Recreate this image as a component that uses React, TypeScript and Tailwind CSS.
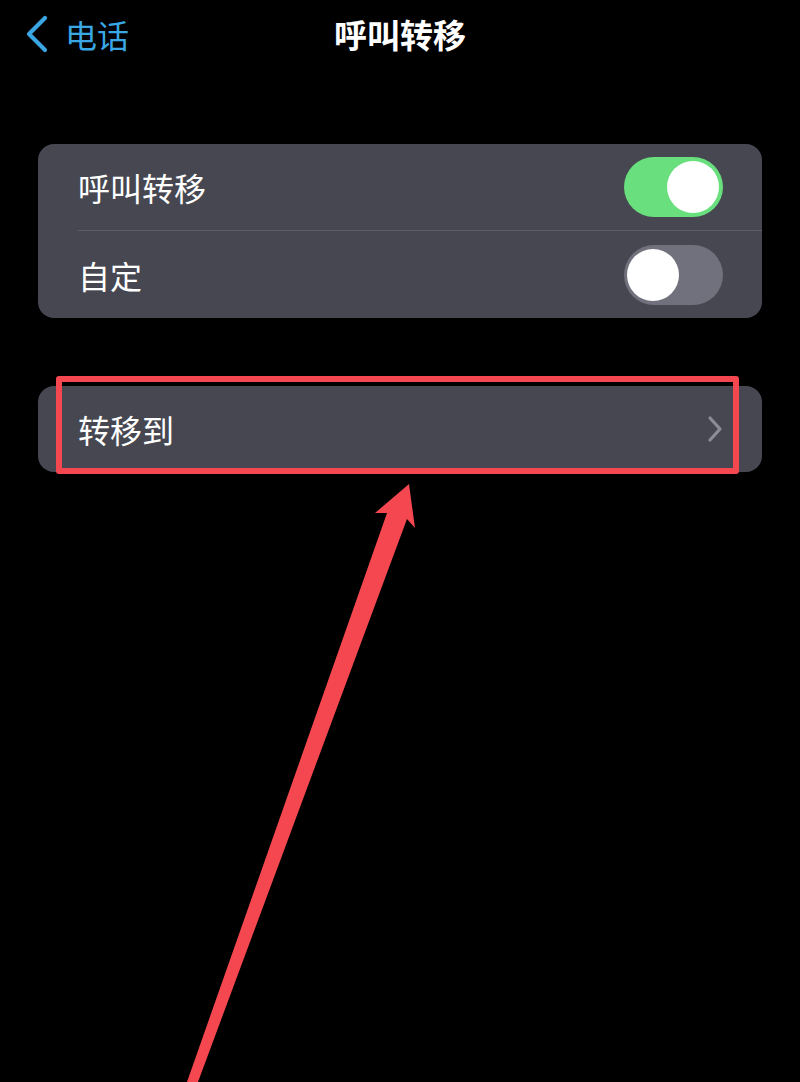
const font = { fontFamily: '"Noto Sans CJK SC", "Noto Sans", sans-serif' }

function Toggle({ on }: { on: boolean }) {
    return (
        <div
            className={`relative w-[99px] h-[60px] rounded-full ${on ? 'bg-[#69df7d]' : 'bg-[#71717d]'}`}
        >
            <div
                className={`absolute top-[4px] w-[52px] h-[52px] rounded-full bg-white ${on ? 'right-[4px]' : 'left-[3px]'}`}
            />
        </div>
    )
}

export default function App() {
    return (
        <div className="relative w-[800px] h-[1082px] bg-black overflow-hidden" style={font}>
            {/* nav bar */}
            <div className="grid grid-cols-[1fr_auto_1fr] items-center h-[68px]">
                <div className="flex items-center pl-[24px] text-[#3aa7e4]">
                    <svg width="26" height="38" viewBox="0 0 26 38" fill="none">
                        <path
                            d="M21 3 L5 19 L21 35"
                            stroke="currentColor"
                            strokeWidth="4.2"
                            strokeLinecap="round"
                            strokeLinejoin="round"
                        />
                    </svg>
                    <span className="text-[32px] leading-none ml-[15px]">电话</span>
                </div>
                <h1 className="text-[33px] leading-none font-bold text-white">呼叫转移</h1>
                <div />
            </div>

            {/* toggles */}
            <div className="mt-[76px] mx-[38px] rounded-[16px] bg-[#464751] overflow-hidden">
                <div className="flex items-center justify-between h-[86px] pl-[40px] pr-[39px]">
                    <span className="text-[32px] text-white leading-none">呼叫转移</span>
                    <Toggle on />
                </div>
                <div className="ml-[40px] h-px bg-[#5c5d68]" />
                <div className="flex items-center justify-between h-[87px] pl-[40px] pr-[39px]">
                    <span className="text-[32px] text-white leading-none">自定</span>
                    <Toggle on={false} />
                </div>
            </div>

            {/* forward to */}
            <div className="mt-[68px] mx-[38px] rounded-[16px] bg-[#464751] flex items-center justify-between h-[86px] pl-[40px] pr-[38px]">
                <span className="text-[32px] text-white leading-none">转移到</span>
                <svg width="18" height="28" viewBox="0 0 18 28" fill="none">
                    <path
                        d="M4 3 L14 14 L4 25"
                        stroke="#8b8c96"
                        strokeWidth="3.2"
                        strokeLinecap="round"
                        strokeLinejoin="round"
                    />
                </svg>
            </div>

            {/* annotation: red box */}
            <div className="absolute left-[56px] top-[376px] w-[683px] h-[98px] border-[6px] border-[#f5474f] rounded-[3px]" />

            {/* annotation: arrow */}
            <svg className="absolute inset-0" width="800" height="1082" viewBox="0 0 800 1082">
                <polygon
                    points="409,484 415,528 407,519 198,1082 187,1082 387,513 375,513"
                    fill="#f5474f"
                />
            </svg>
        </div>
    )
}
